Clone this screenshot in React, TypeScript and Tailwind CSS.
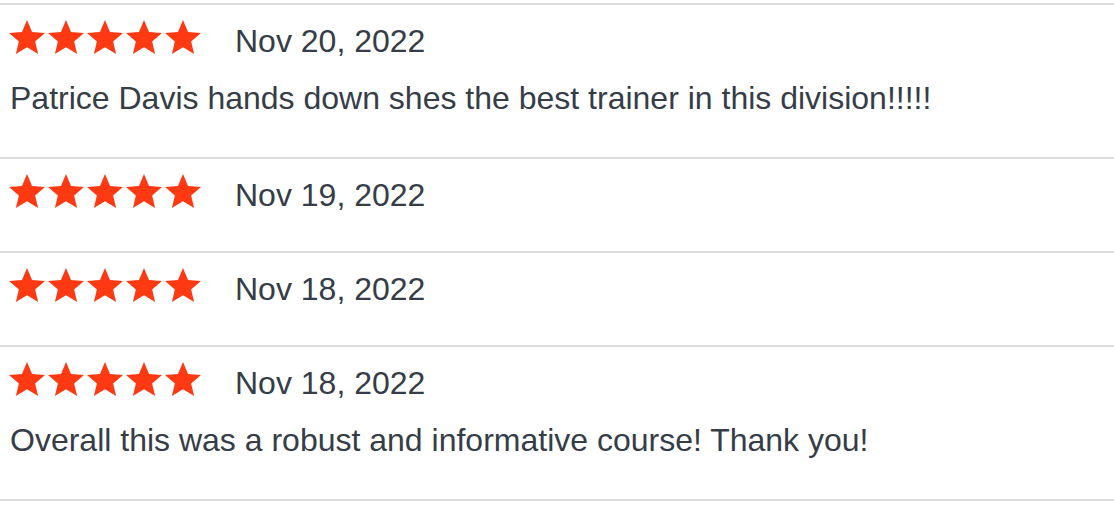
const reviews = [
  { date: "Nov 20, 2022", comment: "Patrice Davis hands down shes the best trainer in this division!!!!!" },
  { date: "Nov 19, 2022", comment: "" },
  { date: "Nov 18, 2022", comment: "" },
  { date: "Nov 18, 2022", comment: "Overall this was a robust and informative course! Thank you!" },
];

function Star() {
  return (
    <svg viewBox="0 0 24 24" className="h-[36px] w-[36px]" fill="#ff3a12">
      <polygon points="12,0.6 15.35,8.59 24,9.3 17.42,14.96 19.42,23.41 12,18.9 4.58,23.41 6.58,14.96 0,9.3 8.65,8.59" />
    </svg>
  );
}

function Stars() {
  return (
    <div className="flex gap-[3px]">
      {[0, 1, 2, 3, 4].map((i) => (
        <Star key={i} />
      ))}
    </div>
  );
}

export default function App() {
  return (
    <div className="min-h-screen bg-white pt-[3px] font-['Liberation_Sans',Arial,sans-serif] text-[#363d47]">
      <div className="border-t-2 border-[#dcdcdc]">
        {reviews.map((r, i) => (
          <div key={i} className="border-b-2 border-[#dcdcdc] px-[9px] pt-3 pb-10">
            <div className="flex h-10 items-center">
              <Stars />
              <span className="mt-[7px] ml-[34px] text-[32px] leading-none">{r.date}</span>
            </div>
            {r.comment && (
              <p className="mt-[23px] pl-px text-[32px] leading-[37px]">{r.comment}</p>
            )}
          </div>
        ))}
      </div>
    </div>
  );
}
